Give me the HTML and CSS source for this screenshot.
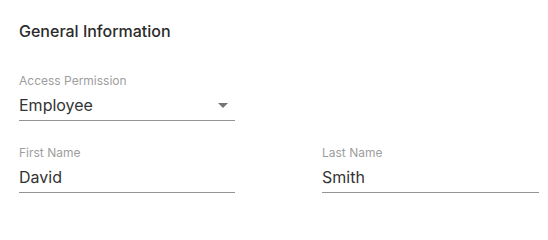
FILE: index.html
```html
<!DOCTYPE html>
<html lang="en">
<head>
<meta charset="utf-8">
<title>General Information</title>
<link rel="stylesheet" href="styles.css">
</head>
<body>
<section class="panel">
  <h2 class="title">General Information</h2>
  <div class="form">
    <div class="field">
      <div class="label">Access Permission</div>
      <div class="control select">
        <span class="value">Employee</span>
        <svg class="caret" width="10" height="5" viewBox="0 0 10 5" aria-hidden="true"><path d="M0 0h10L5 5z" fill="#757575"/></svg>
      </div>
    </div>
    <div class="spacer"></div>
    <div class="field">
      <div class="label">First Name</div>
      <div class="control"><span class="value">David</span></div>
    </div>
    <div class="field">
      <div class="label">Last Name</div>
      <div class="control"><span class="value">Smith</span></div>
    </div>
  </div>
</section>
</body>
</html>
```
FILE: styles.css
```css
html, body {
  margin: 0;
  padding: 0;
  background: #ffffff;
}
body {
  font-family: Inter, "Noto Sans", "Liberation Sans", sans-serif;
  color: #333333;
}
.panel {
  padding: 22px 9px 0 19px;
}
.title {
  margin: 0;
  font-size: 16px;
  line-height: 18px;
  font-weight: 500;
  color: #2b2b2b;
}
.form {
  margin-top: 33px;
  display: grid;
  grid-template-columns: 216px 217px;
  column-gap: 87px;
  row-gap: 24px;
}
.field {
  display: flex;
  flex-direction: column;
}
.label {
  font-size: 12px;
  line-height: 16px;
  color: #9e9e9e;
}
.control {
  margin-top: 4px;
  padding-bottom: 3px;
  border-bottom: 1px solid #949494;
  display: flex;
  align-items: center;
  justify-content: space-between;
}
.value {
  font-size: 16px;
  line-height: 24px;
  color: #333333;
}
.caret {
  margin-right: 7px;
  margin-top: 0;
}
```
